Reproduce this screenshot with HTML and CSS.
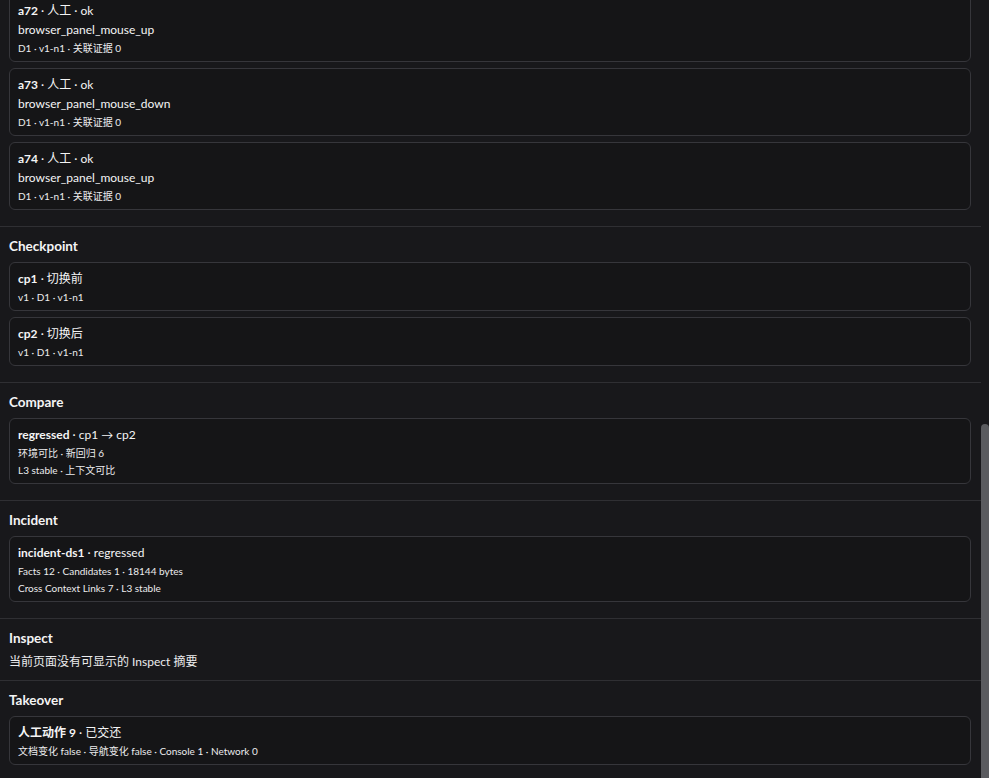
FILE: index.html
```html
<!DOCTYPE html>
<html lang="zh-CN">
<head>
<meta charset="utf-8">
<title>Panel</title>
<link rel="stylesheet" href="styles.css">
</head>
<body>
<div class="app">
<div class="scroller">
  <div class="content">
    <section class="section">
      <h3 class="section-title">Actions</h3>
      <div class="cards">
        <div class="card"><div class="card-title"><b>a60</b> · 人工 · ok</div><div class="card-line">browser_panel_mouse_down</div><div class="card-meta">D1 · v1-n1 · 关联证据 0</div></div>
        <div class="card"><div class="card-title"><b>a61</b> · 人工 · ok</div><div class="card-line">browser_panel_mouse_up</div><div class="card-meta">D1 · v1-n1 · 关联证据 0</div></div>
        <div class="card"><div class="card-title"><b>a62</b> · 人工 · ok</div><div class="card-line">browser_panel_mouse_down</div><div class="card-meta">D1 · v1-n1 · 关联证据 0</div></div>
        <div class="card"><div class="card-title"><b>a63</b> · 人工 · ok</div><div class="card-line">browser_panel_mouse_up</div><div class="card-meta">D1 · v1-n1 · 关联证据 0</div></div>
        <div class="card"><div class="card-title"><b>a64</b> · 人工 · ok</div><div class="card-line">browser_panel_mouse_down</div><div class="card-meta">D1 · v1-n1 · 关联证据 0</div></div>
        <div class="card"><div class="card-title"><b>a65</b> · 人工 · ok</div><div class="card-line">browser_panel_mouse_up</div><div class="card-meta">D1 · v1-n1 · 关联证据 0</div></div>
        <div class="card"><div class="card-title"><b>a66</b> · 人工 · ok</div><div class="card-line">browser_panel_mouse_down</div><div class="card-meta">D1 · v1-n1 · 关联证据 0</div></div>
        <div class="card"><div class="card-title"><b>a67</b> · 人工 · ok</div><div class="card-line">browser_panel_mouse_up</div><div class="card-meta">D1 · v1-n1 · 关联证据 0</div></div>
        <div class="card"><div class="card-title"><b>a68</b> · 人工 · ok</div><div class="card-line">browser_panel_mouse_down</div><div class="card-meta">D1 · v1-n1 · 关联证据 0</div></div>
        <div class="card"><div class="card-title"><b>a69</b> · 人工 · ok</div><div class="card-line">browser_panel_mouse_up</div><div class="card-meta">D1 · v1-n1 · 关联证据 0</div></div>
        <div class="card"><div class="card-title"><b>a70</b> · 人工 · ok</div><div class="card-line">browser_panel_mouse_down</div><div class="card-meta">D1 · v1-n1 · 关联证据 0</div></div>
        <div class="card"><div class="card-title"><b>a71</b> · 人工 · ok</div><div class="card-line">browser_panel_mouse_down</div><div class="card-meta">D1 · v1-n1 · 关联证据 0</div></div>
        <div class="card"><div class="card-title"><b>a72</b> · 人工 · ok</div><div class="card-line">browser_panel_mouse_up</div><div class="card-meta">D1 · v1-n1 · 关联证据 0</div></div>
        <div class="card"><div class="card-title"><b>a73</b> · 人工 · ok</div><div class="card-line">browser_panel_mouse_down</div><div class="card-meta">D1 · v1-n1 · 关联证据 0</div></div>
        <div class="card"><div class="card-title"><b>a74</b> · 人工 · ok</div><div class="card-line">browser_panel_mouse_up</div><div class="card-meta">D1 · v1-n1 · 关联证据 0</div></div>
      </div>
    </section>

    <section class="section">
      <h3 class="section-title">Checkpoint</h3>
      <div class="cards">
        <div class="card"><div class="card-title"><b>cp1</b> · 切换前</div><div class="card-meta">v1 · D1 · v1-n1</div></div>
        <div class="card"><div class="card-title"><b>cp2</b> · 切换后</div><div class="card-meta">v1 · D1 · v1-n1</div></div>
      </div>
    </section>

    <section class="section">
      <h3 class="section-title">Compare</h3>
      <div class="cards">
        <div class="card"><div class="card-title"><b>regressed</b> · cp1 → cp2</div><div class="card-meta">环境可比 · 新回归 6</div><div class="card-meta">L3 stable · 上下文可比</div></div>
      </div>
    </section>

    <section class="section">
      <h3 class="section-title">Incident</h3>
      <div class="cards">
        <div class="card"><div class="card-title"><b>incident-ds1</b> · regressed</div><div class="card-meta">Facts 12 · Candidates 1 · 18144 bytes</div><div class="card-meta">Cross Context Links 7 · L3 stable</div></div>
      </div>
    </section>

    <section class="section">
      <h3 class="section-title">Inspect</h3>
      <p class="empty">当前页面没有可显示的 Inspect 摘要</p>
    </section>

    <section class="section">
      <h3 class="section-title">Takeover</h3>
      <div class="cards">
        <div class="card"><div class="card-title"><b>人工动作 9</b> · 已交还</div><div class="card-meta">文档变化 false · 导航变化 false · Console 1 · Network 0</div></div>
      </div>
    </section>
  </div>
</div>
<div class="scrollbar"><div class="thumb"></div></div>
</div>
</body>
</html>
```
FILE: styles.css
```css
html, body {
  margin: 0;
  padding: 0;
  background: #18181b;
}

body {
  font-family: "Lato", "Noto Sans CJK SC", sans-serif;
  color: #f4f4f5;
}

.app {
  display: flex;
  height: 100vh;
}

.scroller {
  flex: 1;
  min-width: 0;
  height: 100vh;
  overflow-y: auto;
  display: flex;
  flex-direction: column-reverse;
  scrollbar-width: none;
}

.scroller::-webkit-scrollbar {
  display: none;
}

.scrollbar {
  flex: none;
  width: 8px;
  display: flex;
  flex-direction: column;
  justify-content: flex-end;
}

.thumb {
  height: 354px;
  background: #5a5b5f;
  border-radius: 4px 4px 0 0;
}

.content {
  flex: none;
}

.section {
  padding: 9px 10px 8px 9px;
  border-top: 1px solid #2f2f33;
}

.section:first-child {
  border-top: none;
}

.section-title {
  margin: 0 0 6px;
  font-size: 13.5px;
  line-height: 20px;
  font-weight: 700;
  color: #f4f4f5;
}

.cards {
  display: flex;
  flex-direction: column;
  gap: 6px;
  margin-bottom: 8px;
}

.section:last-child .cards {
  margin-bottom: 5px;
}

.card {
  border: 1px solid #36363b;
  border-radius: 6px;
  background: #151517;
  padding: 8px 8px 6px;
  display: flex;
  flex-direction: column;
  gap: 3px;
}

.card-title {
  font-size: 12px;
  line-height: 16px;
  color: #f4f4f5;
}

.card-title b {
  font-weight: 700;
}

.card-line {
  font-size: 12px;
  line-height: 16px;
  color: #f4f4f5;
}

.card-meta {
  font-size: 10px;
  line-height: 14px;
  color: #ececee;
}

.empty {
  margin: -2px 0 0;
  font-size: 12px;
  line-height: 20px;
  color: #ececee;
}
```
